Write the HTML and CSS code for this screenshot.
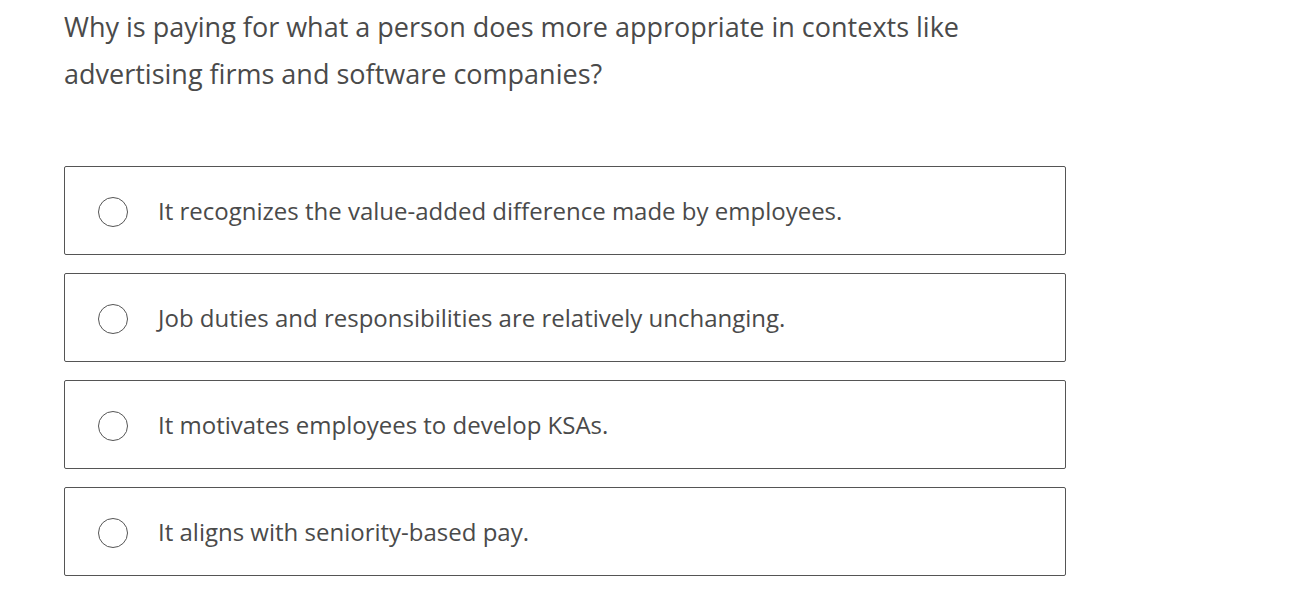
FILE: index.html
```html
<!DOCTYPE html>
<html>
<head>
<meta charset="utf-8">
<link rel="stylesheet" href="styles.css">
</head>
<body>
<div class="page">
  <div class="question">Why is paying for what a person does more appropriate in contexts like advertising firms and software companies?</div>
  <div class="options">
    <label class="option"><span class="radio"></span><span class="text">It recognizes the value-added difference made by employees.</span></label>
    <label class="option"><span class="radio"></span><span class="text">Job duties and responsibilities are relatively unchanging.</span></label>
    <label class="option"><span class="radio"></span><span class="text">It motivates employees to develop KSAs.</span></label>
    <label class="option"><span class="radio"></span><span class="text">It aligns with seniority-based pay.</span></label>
  </div>
</div>
</body>
</html>
```
FILE: styles.css
```css
html, body {
  margin: 0;
  padding: 0;
  background: #fff;
}
body {
  font-family: "Open Sans", "Liberation Sans", sans-serif;
  color: #4a4a4a;
}
.page {
  padding: 3px 0 0 64px;
}
.question {
  font-size: 27px;
  line-height: 47px;
  width: 960px;
}
.options {
  margin-top: 69px;
  display: flex;
  flex-direction: column;
  gap: 18px;
  width: 1002px;
}
.option {
  box-sizing: border-box;
  height: 89px;
  border: 1px solid #555;
  border-radius: 2px;
  display: flex;
  align-items: center;
  padding-left: 33px;
}
.radio {
  box-sizing: border-box;
  width: 30px;
  height: 30px;
  border: 1px solid #555;
  border-radius: 50%;
  flex: none;
  margin-right: 30px;
  margin-top: 2px;
}
.text {
  font-size: 24px;
  line-height: 30px;
  margin-top: 1px;
}
```
